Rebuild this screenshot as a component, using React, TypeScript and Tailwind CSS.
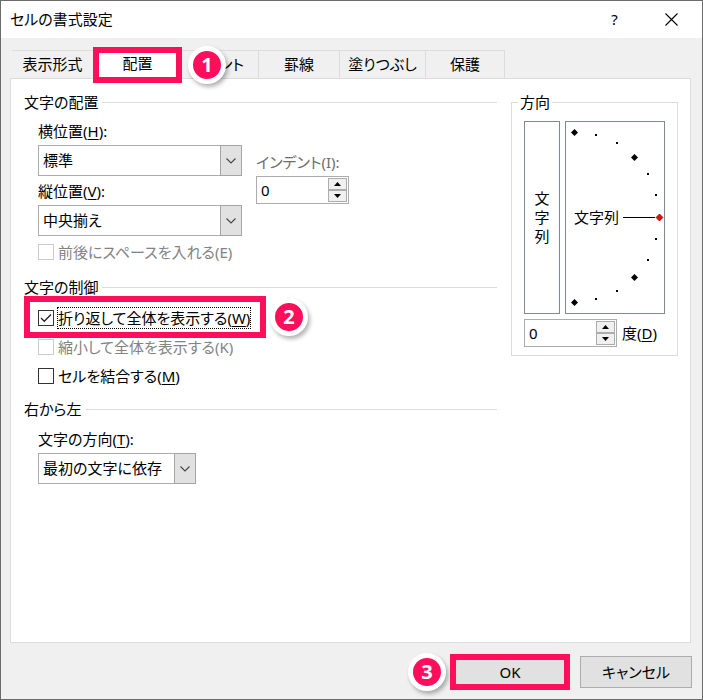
import { useState, type ReactNode } from 'react';

interface SelectFieldProps {
  id: string;
  label: string;
  accessKey: string;
  options: string[];
  widthClass: string;
}

interface CheckFieldProps {
  id: string;
  label: string;
  accessKey: string;
  defaultChecked?: boolean;
  disabled?: boolean;
  focused?: boolean;
}

const BIG_MARKS = [[8, 10], [68, 35], [68, 155], [8, 180]];
const SMALL_MARKS = [[30, 13], [51, 21], [82, 52], [90, 73], [90, 117], [82, 138], [51, 169], [30, 177]];

function AccessKey({ letter }: { letter: string }) {
  return (
    <>
      (<span className="underline underline-offset-2">{letter}</span>)
    </>
  );
}

function Badge({ n, className }: { n: number; className: string }) {
  return (
    <span
      className={`absolute top-1/2 z-20 flex size-[38px] -translate-y-1/2 items-center justify-center rounded-full border-[5px] border-white bg-[#ff0f5b] font-['Open_Sans',sans-serif] text-xl font-bold text-white shadow-[2px_3px_4px_rgba(0,0,0,0.3)] ${className}`}
    >
      {n}
    </span>
  );
}

function Highlight({ className, children }: { className: string; children: ReactNode }) {
  return (
    <div className={`pointer-events-none absolute z-10 border-[6px] border-[#ff0f5b] ${className}`}>
      {children}
    </div>
  );
}

function SectionTitle({ children }: { children: ReactNode }) {
  return (
    <h2 className="flex items-center gap-1 leading-5">
      {children}
      <span className="h-px flex-1 bg-[#dcdcdc]" />
    </h2>
  );
}

function SelectField({ id, label, accessKey, options, widthClass }: SelectFieldProps) {
  return (
    <div className="flex flex-col gap-1">
      <label htmlFor={id} className="leading-5">
        {label}
        <AccessKey letter={accessKey} />:
      </label>
      <div className={`relative ${widthClass}`}>
        <select
          id={id}
          className="block h-[31px] w-full appearance-none border border-[#acacac] bg-white pr-6 pl-1 outline-none"
        >
          {options.map((option) => (
            <option key={option}>{option}</option>
          ))}
        </select>
        <span className="pointer-events-none absolute inset-y-0 right-0 flex w-[22px] items-center justify-center border border-[#a5a5a8] bg-[#e1e1e1]">
          <svg className="h-[6px] w-[10px]" viewBox="0 0 10 6" fill="none" stroke="#444" strokeWidth="1.1">
            <path d="M.5.5 5 5 9.5.5" />
          </svg>
        </span>
      </div>
    </div>
  );
}

function CheckField({ id, label, accessKey, defaultChecked, disabled, focused }: CheckFieldProps) {
  return (
    <div className="flex items-center gap-[3px]">
      <span className="relative flex size-4 shrink-0">
        <input
          id={id}
          type="checkbox"
          defaultChecked={defaultChecked}
          disabled={disabled}
          className="peer size-4 appearance-none border border-[#333] bg-white outline-none disabled:border-[#cccccc]"
        />
        <svg
          className="pointer-events-none absolute inset-0 hidden size-4 peer-checked:block"
          viewBox="0 0 16 16"
          fill="none"
          stroke="#222"
          strokeWidth="1.3"
        >
          <path d="M3 8 6.3 11.3 13 4.5" />
        </svg>
      </span>
      <label
        htmlFor={id}
        className={`border border-dotted leading-5 ${focused ? 'border-black' : 'border-transparent'} ${disabled ? 'text-[#838383]' : 'text-black'}`}
      >
        {label}
        {disabled ? `(${accessKey})` : <AccessKey letter={accessKey} />}
      </label>
    </div>
  );
}

function Spinner({ id }: { id: string }) {
  const [value, setValue] = useState(0);
  const buttonClass = 'flex flex-1 items-center justify-center border border-[#acacac] bg-[#f0f0f0]';

  return (
    <div className="flex h-7 w-[93px] border border-[#acacac] bg-white p-px">
      <input
        id={id}
        type="number"
        value={value}
        onChange={(e) => setValue(Number(e.target.value))}
        className="w-0 min-w-0 flex-1 pl-[3px] outline-none [appearance:textfield] [&::-webkit-inner-spin-button]:appearance-none"
      />
      <div className="flex w-[19px] flex-col">
        <button type="button" aria-label="増やす" className={buttonClass} onClick={() => setValue(value + 1)}>
          <svg className="h-[4px] w-[7px]" viewBox="0 0 7 4">
            <path d="M3.5 0 7 4H0z" />
          </svg>
        </button>
        <button type="button" aria-label="減らす" className={buttonClass} onClick={() => setValue(value - 1)}>
          <svg className="h-[4px] w-[7px]" viewBox="0 0 7 4">
            <path d="M0 0h7L3.5 4z" />
          </svg>
        </button>
      </div>
    </div>
  );
}

function OrientationDial() {
  return (
    <div className="relative flex h-[193px] w-[100px] items-center border border-[#828790] pl-2">
      <span>文字列</span>
      <svg className="absolute inset-0 size-full" viewBox="0 0 98 191">
        <path d="M57 95.5H89" stroke="#000" />
        {BIG_MARKS.map(([x, y]) => (
          <path key={`${x}-${y}`} d="M-3.5 0 0-3.5 3.5 0 0 3.5z" transform={`translate(${x + 0.5} ${y + 0.5})`} />
        ))}
        {SMALL_MARKS.map(([x, y]) => (
          <rect key={`${x}-${y}`} x={x - 1} y={y - 1} width="2" height="2" />
        ))}
        <path d="M90 95.5 93.5 92 97 95.5 93.5 99z" fill="#f00" stroke="#400" strokeWidth=".6" />
      </svg>
    </div>
  );
}

export default function App() {
  const tabClass = 'h-7 border-t border-r border-[#dcdcdc]';

  return (
    <div className="flex min-h-screen flex-col border border-[#6b6b6b] bg-[#f0f0f0] font-['Noto_Sans','Noto_Sans_CJK_JP',sans-serif] text-[15px] text-black [font-feature-settings:'palt']">
      {/* Title bar */}
      <header className="flex h-[37px] items-center bg-white pr-0.5 pl-[9px]">
        <h1 className="flex-1">セルの書式設定</h1>
        <button type="button" aria-label="ヘルプ" className="h-full w-[57px]">
          ?
        </button>
        <button type="button" aria-label="閉じる" className="flex h-full w-[57px] items-center justify-center">
          <svg className="size-[13px]" viewBox="0 0 13 13" stroke="#000" strokeWidth="1.1">
            <path d="M.5.5l12 12M12.5.5l-12 12" />
          </svg>
        </button>
      </header>

      <main className="flex flex-1 flex-col pt-[10px] pr-[11px] pl-[9px]">
        {/* Tabs */}
        <div role="tablist" className="flex h-[30px] items-end pl-0.5">
          <button type="button" role="tab" className={`${tabClass} w-[82px]`}>
            表示形式
          </button>
          <div className="relative -mb-px h-[31px] w-[87px] shrink-0">
            <button type="button" role="tab" aria-selected="true" className="size-full bg-white">
              配置
            </button>
            <Highlight className="-inset-x-px -top-px -bottom-1">
              <Badge n={1} className="left-full ml-3" />
            </Highlight>
          </div>
          <button type="button" role="tab" className={`${tabClass} w-[78px]`}>
            フォント
          </button>
          <button type="button" role="tab" className={`${tabClass} w-[81px]`}>
            罫線
          </button>
          <button type="button" role="tab" className={`${tabClass} w-[86px]`}>
            塗りつぶし
          </button>
          <button type="button" role="tab" className={`${tabClass} w-[79px]`}>
            保護
          </button>
        </div>

        <div className="flex flex-1 items-start gap-[14px] border border-[#dcdcdc] bg-white px-3 pt-[13px] pl-[13px]">
          <div className="flex-1">
            {/* Text alignment */}
            <section>
              <SectionTitle>文字の配置</SectionTitle>
              <div className="mt-[9px] flex gap-[14px] pl-[14px]">
                <div className="flex flex-col gap-[5px]">
                  <SelectField id="horizontal" label="横位置" accessKey="H" options={['標準']} widthClass="w-[204px]" />
                  <SelectField id="vertical" label="縦位置" accessKey="V" options={['中央揃え']} widthClass="w-[204px]" />
                  <CheckField id="spacing" label="前後にスペースを入れる" accessKey="E" disabled />
                </div>
                <div className="flex flex-col gap-1 pt-[31px]">
                  <label htmlFor="indent" className="leading-5 text-[#6d6d6d]">
                    インデント(I):
                  </label>
                  <Spinner id="indent" />
                </div>
              </div>
            </section>

            {/* Text control */}
            <section className="mt-[14px]">
              <SectionTitle>文字の制御</SectionTitle>
              <div className="mt-[10px] flex flex-col gap-[7px] pl-[14px]">
                <div className="relative w-[224px]">
                  <CheckField id="wrap" label="折り返して全体を表示する" accessKey="W" defaultChecked focused />
                  <Highlight className="-top-[11px] -right-1 -bottom-[9px] -left-[14px]">
                    <Badge n={2} className="left-full ml-[10px]" />
                  </Highlight>
                </div>
                <CheckField id="shrink" label="縮小して全体を表示する" accessKey="K" disabled />
                <CheckField id="merge" label="セルを結合する" accessKey="M" />
              </div>
            </section>

            {/* Right to left */}
            <section className="mt-3">
              <SectionTitle>右から左</SectionTitle>
              <div className="mt-[10px] pl-[14px]">
                <SelectField id="direction" label="文字の方向" accessKey="T" options={['最初の文字に依存']} widthClass="w-[158px]" />
              </div>
            </section>
          </div>

          {/* Orientation */}
          <fieldset className="border border-[#dcdcdc]">
            <legend className="ml-1.5 px-0.5 leading-5">方向</legend>
            <div className="flex flex-col gap-[5px] px-3 pt-[9px] pb-2">
              <div className="flex gap-[5px]">
                <div className="flex w-9 items-center justify-center border border-[#828790]">
                  <span className="w-[15px] leading-[19px] break-all">文字列</span>
                </div>
                <OrientationDial />
              </div>
              <div className="flex items-center gap-[5px]">
                <Spinner id="degrees" />
                <label htmlFor="degrees">
                  度
                  <AccessKey letter="D" />
                </label>
              </div>
            </div>
          </fieldset>
        </div>
      </main>

      <footer className="flex justify-end gap-[14px] px-[10px] pt-[13px] pb-[11px]">
        <div className="relative h-8 w-28">
          <button type="button" className="size-full bg-[#e1e1e1]">
            OK
          </button>
          <Highlight className="-inset-x-1 -inset-y-0.5">
            <Badge n={3} className="right-full mr-[10px]" />
          </Highlight>
        </div>
        <button type="button" className="h-8 w-28 border border-[#adadad] bg-[#e1e1e1]">
          キャンセル
        </button>
      </footer>
    </div>
  );
}
